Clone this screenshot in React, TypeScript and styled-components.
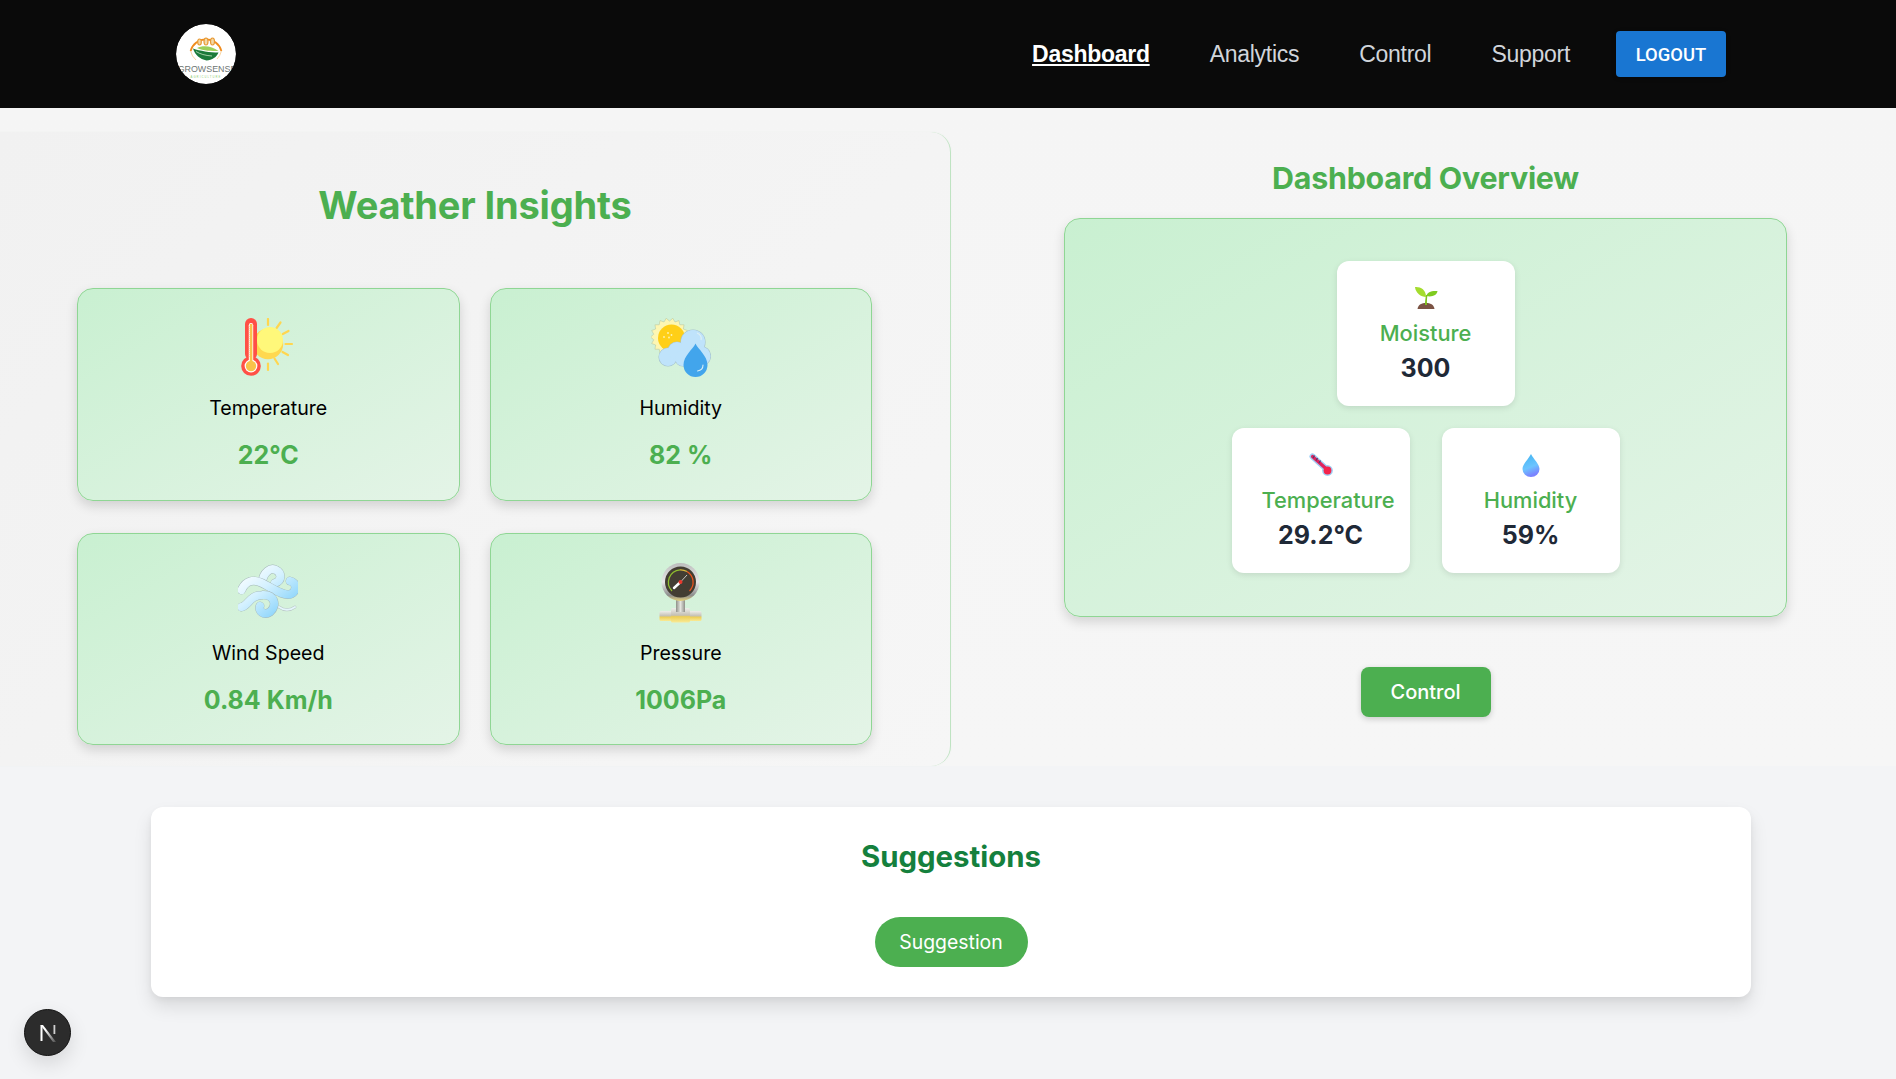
import React from 'react';
import styled, { createGlobalStyle } from 'styled-components';

const GlobalStyle = createGlobalStyle`
  html, body {
    margin: 0;
    padding: 0;
    background: #f3f4f6;
    font-family: 'Inter', 'Liberation Sans', sans-serif;
  }
  * { box-sizing: border-box; }
`;

const spikyCircle = (cx: number, cy: number, outer: number, inner: number, spikes: number) => {
  const points: string[] = [];
  for (let i = 0; i < spikes * 2; i++) {
    const r = i % 2 === 0 ? outer : inner;
    const a = (Math.PI * i) / spikes;
    points.push(`${(cx + r * Math.cos(a)).toFixed(2)},${(cy + r * Math.sin(a)).toFixed(2)}`);
  }
  return points.join(' ');
};

const Logo = () => (
  <svg width="60" height="60" viewBox="0 0 60 60">
    <circle cx="30" cy="30" r="30" fill="#fff" />
    <path d="M14.600 27 A16 16 0 0 1 45.400 27" fill="none" stroke="#f08c1e" strokeWidth="1.800" />
    <path d="M14.600 27 A16 16 0 0 0 20 36" fill="none" stroke="#f6c98a" strokeWidth="0.800" />
    <path d="M45.400 27 A16 16 0 0 1 41 35" fill="none" stroke="#f6c98a" strokeWidth="0.800" />
    <g fill="#f3d9a8" stroke="#e89a34" strokeWidth="1.200">
      <ellipse cx="23.500" cy="18" rx="1.800" ry="3" />
      <ellipse cx="30" cy="17.500" rx="2" ry="3.500" />
      <ellipse cx="36.500" cy="17.500" rx="2" ry="3.500" />
    </g>
    <path d="M21 24 C27 21 36 22 42.500 27 C36 27 27 27 21 24 Z" fill="#9ccf5a" />
    <path d="M17 24.500 C24 27 34 28.500 42.500 28.500 C41 33 36 36 30.500 36.500 C24 35 19 31 17 24.500 Z" fill="#1b7a3a" />
    <path d="M20 27.500 C24 30 29 31.500 36 32" fill="none" stroke="#d9efd0" strokeWidth="0.700" />
    <text x="31" y="47.500" textAnchor="middle" fontSize="8.900" fontFamily="'Liberation Sans', sans-serif" fill="#6c7573">
      GROWSENSE
    </text>
    <text x="30" y="54" textAnchor="middle" fontSize="2.800" fontFamily="'Liberation Sans', sans-serif" fill="#8fce76" letterSpacing="1">
      AGRICULTURE
    </text>
  </svg>
);

const ThermoSunIcon = () => (
  <svg width="60" height="60" viewBox="0 0 60 60">
    <g stroke="#ffd64f" strokeWidth="2.200" strokeLinecap="round">
      <path d="M30 1 V7" />
      <path d="M42.500 4.500 L38.600 10" />
      <path d="M50.500 13 L44.800 16" />
      <path d="M54 26 H47.500" />
      <path d="M50 37 L44.500 34" />
      <path d="M40 46 L36.500 40.500" />
      <path d="M30 52 V45.500" />
    </g>
    <circle cx="30" cy="26" r="15.200" fill="#ffd84f" />
    <circle cx="32" cy="22" r="13" fill="#fff87a" />
    <rect x="7" y="0" width="12" height="42" rx="6" fill="#ff5046" />
    <circle cx="13" cy="48" r="9.800" fill="#ff5046" />
    <rect x="10.800" y="5" width="4.400" height="40" rx="2.200" fill="#fff" />
    <circle cx="13" cy="48" r="6.400" fill="#fff" />
    <rect x="11.800" y="6" width="2.600" height="38" fill="#f9c34a" />
    <circle cx="13" cy="48" r="5.200" fill="#f9c34a" />
    <path d="M10.800 8 V40" stroke="#ff8a70" strokeWidth="1" strokeDasharray="1 1" />
  </svg>
);

const cloudBlobs = [
  { cx: 17, cy: 39, r: 9 },
  { cx: 26, cy: 33, r: 9 },
  { cx: 42, cy: 24, r: 12 },
  { cx: 50, cy: 38, r: 9.500 },
  { cx: 32, cy: 40, r: 8 },
];

const HumidIcon = () => (
  <svg width="60" height="60" viewBox="0 0 60 60">
    <polygon points={spikyCircle(18.500, 19, 19, 16, 18)} fill="#fdf6b2" stroke="#b9c9a5" strokeWidth="0.600" />
    <circle cx="20.500" cy="20" r="13.500" fill="#ffcf17" />
    <g fill="#fff3b0">
      <circle cx="17" cy="15" r="0.900" />
      <circle cx="20.500" cy="17" r="0.900" />
      <circle cx="13" cy="19" r="0.900" />
      <circle cx="18" cy="19.500" r="0.900" />
    </g>
    <g fill="#bfe3fb" stroke="#a7c4cf" strokeWidth="1.200">
      {cloudBlobs.map((b) => (
        <circle key={b.cx} {...b} />
      ))}
    </g>
    <g fill="#bfe3fb">
      {cloudBlobs.map((b) => (
        <circle key={b.cx} {...b} />
      ))}
    </g>
    <path d="M46 15 C49 16 51 19 50 22" fill="none" stroke="#dff0f3" strokeWidth="1.200" />
    <path d="M44.500 25.500 C47 31 56.500 38 56.500 47 A12 12 0 0 1 32.500 47 C32.500 38 42 31 44.500 25.500 Z" fill="#42a5ec" />
    <path d="M52 47 C52 50 50 52.500 46.500 53" fill="none" stroke="#d7edf7" strokeWidth="1.100" strokeLinecap="round" />
  </svg>
);

const windPaths = [
  'M24 20 C25 9 33 4 38 7 C44 10 44 18 37 20',
  'M3.500 27 C8 17 16 16 24 20 C34 25 46 34 53 31 C59 28 59 19 52 18',
  'M3.500 44 C10 43 12 32 24 32 C36 31 40 42 32 49 C26 53 20 48 22 43',
];

const WindIcon = () => (
  <svg width="60" height="60" viewBox="0 0 60 60">
    <defs>
      <linearGradient id="windFill" gradientUnits="userSpaceOnUse" x1="5" y1="5" x2="45" y2="55">
        <stop offset="0" stopColor="#ffffff" />
        <stop offset="0.450" stopColor="#d4f1ff" />
        <stop offset="1" stopColor="#7fcffa" />
      </linearGradient>
    </defs>
    <g fill="none" strokeLinecap="round">
      {windPaths.map((d) => (
        <React.Fragment key={d}>
          <path d={d} stroke="#a3b6b8" strokeWidth="8.800" />
          <path d={d} stroke="url(#windFill)" strokeWidth="8" />
        </React.Fragment>
      ))}
      <path d="M41 44 C46 47.500 52 47.500 57 44" stroke="#b7c4c4" strokeWidth="2.800" />
      <path d="M41 44 C46 47.500 52 47.500 57 44" stroke="#e4f6fb" strokeWidth="2" />
    </g>
  </svg>
);

const GaugeIcon = () => (
  <svg width="60" height="60" viewBox="0 0 60 60">
    <defs>
      <linearGradient id="pipeFill" x1="0" y1="0" x2="0" y2="1">
        <stop offset="0" stopColor="#eeeeea" />
        <stop offset="0.500" stopColor="#c4c0b4" />
        <stop offset="0.600" stopColor="#edce55" />
        <stop offset="1" stopColor="#f9ea96" />
      </linearGradient>
      <linearGradient id="rimFill" x1="0" y1="0" x2="0" y2="1">
        <stop offset="0" stopColor="#bdbdbd" />
        <stop offset="0.500" stopColor="#e8e8e8" />
        <stop offset="0.850" stopColor="#8d8d8d" />
        <stop offset="1" stopColor="#e6d27a" />
      </linearGradient>
      <linearGradient id="stemFill" x1="0" y1="0" x2="1" y2="0">
        <stop offset="0" stopColor="#8f8f88" />
        <stop offset="0.500" stopColor="#e4e4de" />
        <stop offset="1" stopColor="#8f8f88" />
      </linearGradient>
    </defs>
    <rect x="25" y="36" width="9" height="13" fill="url(#stemFill)" />
    <rect x="8.500" y="48" width="42" height="10" rx="1.500" fill="url(#pipeFill)" />
    <rect x="20" y="45" width="19" height="14.500" rx="1.500" fill="url(#pipeFill)" />
    <rect x="25" y="40" width="9" height="9" fill="url(#stemFill)" />
    <circle cx="29.500" cy="19" r="19" fill="url(#rimFill)" />
    <circle cx="29.500" cy="19" r="15.500" fill="#433d33" />
    <path d="M21 28 A12.500 12.500 0 0 1 29 6.800" fill="none" stroke="#8fbd2f" strokeWidth="1.300" />
    <path d="M29 6.800 A12.500 12.500 0 0 1 36 8.500" fill="none" stroke="#d9b63c" strokeWidth="1.300" />
    <path d="M36 8.500 A12.500 12.500 0 0 1 38.500 28" fill="none" stroke="#e8541f" strokeWidth="1.300" />
    <path d="M29.500 19 L23 25" stroke="#fff" strokeWidth="2.400" strokeLinecap="round" />
    <path d="M29.500 19 L36 12" stroke="#e8e8e8" strokeWidth="0.800" />
    <circle cx="29.500" cy="19" r="2" fill="#e8382c" />
  </svg>
);

const SeedlingEmoji = () => (
  <svg width="24" height="24" viewBox="0 0 24 24">
    <path d="M3.500 23 C4 18.500 8 17 12 17 C16 17 20 18.500 20.500 23 Z" fill="#7b5344" />
    <path d="M11 19 C11 15 11.500 12 12 9 L13.500 9 C13 12 12.800 15 13 19 Z" fill="#7fc31c" />
    <path d="M12 11 C7 11 1.500 7 1 1 C6 0.500 12 3 12 11 Z" fill="#a4dc2e" />
    <path d="M12.500 10 C13 6 17.500 4.500 23.500 5 C23 9 18 11.500 12.500 10 Z" fill="#7fcb20" />
  </svg>
);

const ThermoEmoji = () => (
  <svg width="24" height="24" viewBox="0 0 24 24">
    <path d="M3.500 3.500 L18.500 17" stroke="#9fd0f5" strokeWidth="6" strokeLinecap="round" />
    <circle cx="18.500" cy="17.500" r="5.400" fill="#9fd0f5" />
    <path d="M3.500 3.500 L18 16.500" stroke="#e0245e" strokeWidth="3.200" strokeLinecap="round" />
    <circle cx="18.500" cy="17.500" r="3.900" fill="#f4244c" />
    <path d="M5.500 2.500 L4 5 M8.500 5 L7 7.500 M11.500 7.500 L10 10" stroke="#4a3c6e" strokeWidth="1.200" />
  </svg>
);

const DropEmoji = () => (
  <svg width="24" height="24" viewBox="0 0 24 24">
    <defs>
      <linearGradient id="dropFill" x1="0" y1="0" x2="0.300" y2="1">
        <stop offset="0" stopColor="#3fb4f0" />
        <stop offset="0.650" stopColor="#6cc4ff" />
        <stop offset="1" stopColor="#7a84ff" />
      </linearGradient>
    </defs>
    <path d="M12 1 C14.500 6 20.500 11 20.500 16 A8.500 8 0 0 1 3.500 16 C3.500 11 9.500 6 12 1 Z" fill="url(#dropFill)" />
  </svg>
);

const NextMark = () => (
  <svg width="24" height="24" viewBox="0 0 24 24">
    <defs>
      <linearGradient id="nextFade" x1="0" y1="0" x2="1" y2="1">
        <stop offset="0.300" stopColor="#fff" />
        <stop offset="1" stopColor="#fff" stopOpacity="0.150" />
      </linearGradient>
    </defs>
    <rect x="4.500" y="4" width="2" height="16" fill="#fff" />
    <path d="M4.500 4 H7 L20 21 H17 Z" fill="url(#nextFade)" />
    <rect x="17.500" y="4" width="1.800" height="9" fill="#cfcfcf" />
  </svg>
);

const weather = [
  { label: 'Temperature', value: '22°C', icon: <ThermoSunIcon /> },
  { label: 'Humidity', value: '82 %', icon: <HumidIcon /> },
  { label: 'Wind Speed', value: '0.84 Km/h', icon: <WindIcon /> },
  { label: 'Pressure', value: '1006Pa', icon: <GaugeIcon /> },
];

const navLinks = ['Dashboard', 'Analytics', 'Control', 'Support'];

export default function App() {
  return (
    <Page>
      <GlobalStyle />
      <Header>
        <LogoWrap>
          <Logo />
        </LogoWrap>
        <Nav>
          {navLinks.map((link) => (
            <NavLink key={link} $active={link === 'Dashboard'}>
              {link}
            </NavLink>
          ))}
          <LogoutButton>LOGOUT</LogoutButton>
        </Nav>
      </Header>

      <TopSection>
        <WeatherPanel>
          <WeatherTitle>Weather Insights</WeatherTitle>
          <WeatherGrid>
            {weather.map((item) => (
              <WeatherCard key={item.label}>
                <IconBox>{item.icon}</IconBox>
                <WeatherLabel>{item.label}</WeatherLabel>
                <WeatherValue>{item.value}</WeatherValue>
              </WeatherCard>
            ))}
          </WeatherGrid>
        </WeatherPanel>

        <Overview>
          <OverviewTitle>Dashboard Overview</OverviewTitle>
          <OverviewPanel>
            <SensorRow>
              <SensorCard>
                <SensorEmoji>
                  <SeedlingEmoji />
                </SensorEmoji>
                <SensorLabel>Moisture</SensorLabel>
                <SensorValue>300</SensorValue>
              </SensorCard>
            </SensorRow>
            <SensorRow>
              <SensorCard>
                <SensorEmoji>
                  <ThermoEmoji />
                </SensorEmoji>
                <SensorLabel>Temperature</SensorLabel>
                <SensorValue>29.2°C</SensorValue>
              </SensorCard>
              <SensorCard>
                <SensorEmoji>
                  <DropEmoji />
                </SensorEmoji>
                <SensorLabel>Humidity</SensorLabel>
                <SensorValue>59%</SensorValue>
              </SensorCard>
            </SensorRow>
          </OverviewPanel>
          <ControlButton>Control</ControlButton>
        </Overview>
      </TopSection>

      <SuggestionsCard>
        <SuggestionsTitle>Suggestions</SuggestionsTitle>
        <SuggestionButton>Suggestion</SuggestionButton>
      </SuggestionsCard>

      <DevBadge>
        <NextMark />
      </DevBadge>
    </Page>
  );
}

const Page = styled.div`
  height: 100vh;
  background: #f3f4f6;
  overflow: hidden;
`;

const Header = styled.header`
  height: 108px;
  background: #0a0a0a;
  display: flex;
  align-items: center;
  justify-content: space-between;
  padding: 0 170px 0 176px;
`;

const LogoWrap = styled.div`
  width: 60px;
  height: 60px;
  border-radius: 50%;
  overflow: hidden;
`;

const Nav = styled.nav`
  display: flex;
  align-items: center;
  gap: 60px;
`;

const NavLink = styled.a<{ $active?: boolean }>`
  font-family: 'Liberation Sans', Arial, sans-serif;
  font-size: 23px;
  letter-spacing: -0.28px;
  font-weight: ${(p) => (p.$active ? 700 : 400)};
  color: ${(p) => (p.$active ? '#ffffff' : '#d1d5db')};
  text-decoration: ${(p) => (p.$active ? 'underline' : 'none')};
  cursor: pointer;
`;

const LogoutButton = styled.button`
  width: 110px;
  height: 46px;
  margin-left: -14px;
  border: none;
  border-radius: 4px;
  background: #1976d2;
  color: #fff;
  font-family: Roboto, 'Liberation Sans', sans-serif;
  font-size: 18.4px;
  font-weight: 500;
  box-shadow: 0 1px 4px rgba(0, 0, 0, 0.3);
  cursor: pointer;
`;

const TopSection = styled.section`
  display: grid;
  grid-template-columns: 951px 1fr;
  height: 658px;
  background: linear-gradient(180deg, #f5f5f5, #f6f6f6);
`;

const WeatherPanel = styled.div`
  margin-top: 24px;
  padding: 48px 79px 0 77px;
  background: linear-gradient(135deg, #f1f1f1, #f6f6f6);
  border-right: 1px solid #bfe3c2;
  border-top-right-radius: 20px;
  border-bottom-right-radius: 20px;
  box-shadow: 0 0 2px rgba(76, 175, 80, 0.06);
`;

const WeatherTitle = styled.h2`
  margin: 0 0 58px 2px;
  height: 50px;
  line-height: 50px;
  text-align: center;
  font-size: 38px;
  letter-spacing: -0.15px;
  font-weight: 700;
  color: #4caf50;
`;

const WeatherGrid = styled.div`
  display: grid;
  grid-template-columns: 382.5px 382.5px;
  column-gap: 30px;
  row-gap: 32px;
`;

const WeatherCard = styled.div`
  height: 212.5px;
  padding-top: 29px;
  display: flex;
  flex-direction: column;
  align-items: center;
  border: 1px solid #8fd694;
  border-radius: 16px;
  background: linear-gradient(150deg, #c9f0d1, #e4f4e7);
  box-shadow: 0 5px 12px rgba(0, 0, 0, 0.14);
`;

const IconBox = styled.div`
  width: 60px;
  height: 60px;
  display: flex;
  justify-content: center;
`;

const WeatherLabel = styled.div`
  margin-top: 16px;
  line-height: 28px;
  font-size: 19.6px;
  font-weight: 400;
  color: #000;
`;

const WeatherValue = styled.div`
  margin-top: 17px;
  line-height: 32px;
  font-size: 25px;
  font-weight: 700;
  color: #4caf50;
`;

const Overview = styled.div`
  display: flex;
  flex-direction: column;
  align-items: center;
  padding: 50px 0 0 4px;
`;

const OverviewTitle = styled.h2`
  margin: 0 0 20px;
  line-height: 40px;
  font-size: 30.4px;
  letter-spacing: -0.25px;
  font-weight: 700;
  color: #4caf50;
`;

const OverviewPanel = styled.div`
  width: 723px;
  height: 399px;
  padding-top: 42px;
  display: flex;
  flex-direction: column;
  align-items: center;
  gap: 22px;
  border: 1px solid #8fd694;
  border-radius: 16px;
  background: linear-gradient(150deg, #c9f0d1, #e4f4e7);
  box-shadow: 0 5px 12px rgba(0, 0, 0, 0.14);
`;

const SensorRow = styled.div`
  display: flex;
  gap: 32px;
`;

const SensorCard = styled.div`
  width: 178px;
  height: 145px;
  padding: 24px 30px 0;
  text-align: center;
  background: #fff;
  border-radius: 12px;
  box-shadow: 0 2px 6px rgba(0, 0, 0, 0.1);
`;

const SensorEmoji = styled.div`
  height: 26px;
  display: flex;
  justify-content: center;
  align-items: center;
`;

const SensorLabel = styled.div`
  margin-top: 7px;
  line-height: 30px;
  font-size: 21.8px;
  font-weight: 500;
  color: #4caf50;
`;

const SensorValue = styled.div`
  margin-top: 4px;
  line-height: 33px;
  font-size: 25px;
  font-weight: 700;
  color: #1f2937;
`;

const ControlButton = styled.button`
  width: 130px;
  height: 50px;
  margin-top: 50px;
  border: none;
  border-radius: 8px;
  background: #4caf50;
  color: #fff;
  font-family: inherit;
  font-size: 20px;
  font-weight: 500;
  box-shadow: 0 2px 6px rgba(0, 0, 0, 0.18);
  cursor: pointer;
`;

const SuggestionsCard = styled.section`
  width: 1600px;
  height: 190px;
  margin: 41px 0 0 151px;
  padding-top: 30px;
  display: flex;
  flex-direction: column;
  align-items: center;
  background: #fff;
  border-radius: 12px;
  box-shadow: 0 10px 18px rgba(0, 0, 0, 0.1), 0 3px 6px rgba(0, 0, 0, 0.05);
`;

const SuggestionsTitle = styled.h3`
  margin: 0 0 40px;
  line-height: 40px;
  font-size: 29.4px;
  font-weight: 700;
  color: #15803d;
`;

const SuggestionButton = styled.button`
  width: 153px;
  height: 50px;
  border: none;
  border-radius: 25px;
  background: #4caf50;
  color: #fff;
  font-family: inherit;
  font-size: 19.4px;
  font-weight: 400;
  cursor: pointer;
`;

const DevBadge = styled.div`
  position: fixed;
  left: 24px;
  bottom: 23px;
  width: 47px;
  height: 47px;
  display: flex;
  align-items: center;
  justify-content: center;
  border-radius: 50%;
  background: #2c2c2c;
  border: 1px solid #111;
  box-shadow: 0 8px 20px rgba(0, 0, 0, 0.12);
`;
